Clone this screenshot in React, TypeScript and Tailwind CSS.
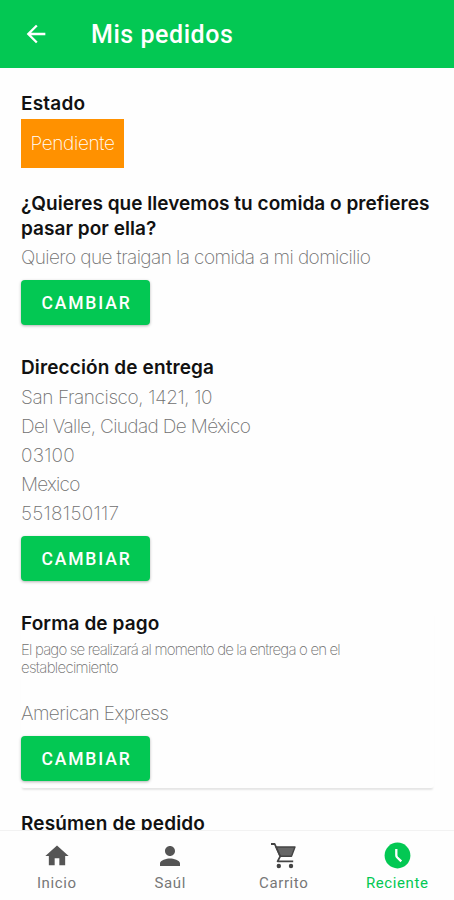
import type { ReactNode } from 'react';

const heading = "whitespace-nowrap font-['Inter',sans-serif] text-[19px] leading-[25px] font-semibold tracking-[0.03px] text-[#111111]";
const body = "whitespace-nowrap font-['Inter',sans-serif] text-[19px] leading-[29px] font-extralight tracking-[-0.58px] text-[#707070]";

function Icon({ d, size, className }: { d: string; size: number; className?: string }) {
  return (
    <svg width={size} height={size} viewBox="0 0 24 24" fill="currentColor" className={className} aria-hidden="true">
      <path d={d} />
    </svg>
  );
}

function CartIcon() {
  return (
    <svg width="27" height="27" viewBox="0 0 27 27" fill="none" stroke="#444444" strokeLinejoin="round" aria-hidden="true">
      <path d="M6 5h19l-3.5 9.3H10.2z" fill="#666666" strokeWidth="1.4" />
      <path d="M1 2h3.7l5.5 12.3-2.6 5h15.6" strokeWidth="1.8" />
      <circle cx="8.8" cy="24" r="2.2" fill="#444444" stroke="none" />
      <circle cx="21" cy="24" r="2.2" fill="#444444" stroke="none" />
    </svg>
  );
}

function ClockIcon() {
  return (
    <svg width="27" height="27" viewBox="0 0 27 27" fill="none" aria-hidden="true">
      <circle cx="13.5" cy="13.5" r="12.9" fill="currentColor" />
      <path d="M12.3 7v6.2c0 1 .3 1.6 1 2.3l4 3.8" stroke="white" strokeWidth="2.3" />
    </svg>
  );
}

function ChangeButton() {
  return (
    <button className="block h-[45px] w-[129px] rounded-[4px] bg-[#03c853] pt-[2px] pl-[2px] text-center font-['Roboto',sans-serif] text-[17.5px] font-medium tracking-[1.85px] text-white shadow-[0_1px_3px_rgba(0,0,0,0.3)]">
      CAMBIAR
    </button>
  );
}

function Tab({ label, active, children }: { label: string; active?: boolean; children: ReactNode }) {
  return (
    <div className={`flex flex-1 flex-col items-center pt-[10px] ${active ? 'text-[#03c853]' : 'text-[#555555]'}`}>
      <div className="flex h-[29px] items-center">{children}</div>
      <span className={`mt-[3px] font-['Roboto',sans-serif] text-[15px] leading-[20px] tracking-[0.6px] ${active ? '' : 'text-[#777777]'}`}>{label}</span>
    </div>
  );
}

export default function App() {
  return (
    <div className="flex h-[900px] w-[454px] flex-col overflow-hidden bg-[#fefefe]">
      <header className="flex h-[68px] shrink-0 items-center bg-[#03c853] pl-[22px] text-white">
        <Icon size={28} d="M20 11H7.83l5.59-5.59L12 4l-8 8 8 8 1.41-1.41L7.83 13H20v-2z" />
        <h1 className="ml-[41px] pt-[2px] font-['Roboto',sans-serif] text-[25px] leading-[30px] font-medium tracking-[0.55px]">Mis pedidos</h1>
      </header>
      <main className="min-h-0 flex-1 overflow-hidden px-[21px] pt-[23px]">
        <section className="h-[100px]">
          <h2 className={heading}><span className="tracking-[0.2px]">Estado</span></h2>
          <div className="mt-[3px] flex h-[49px] w-[103px] items-center justify-center bg-[#ff9100] pt-px font-['Inter',sans-serif] text-[19px] font-extralight tracking-[-0.35px] text-white">Pendiente</div>
        </section>
        <section className="h-[164px]">
          <h2 className={heading}>¿Quieres que llevemos tu comida o prefieres<br />pasar por ella?</h2>
          <p className={`${body} mt-[2px] mb-[8px]`}>Quiero que traigan la comida a mi domicilio</p>
          <ChangeButton />
        </section>
        <section className="h-[256px]">
          <h2 className={heading}><span className="tracking-[0.12px]">Dirección de entrega</span></h2>
          <address className={`${body} mt-[3px] mb-[8px] not-italic`}>
            <span className="tracking-[-0.4px]">San Francisco, 1421, 10</span><br />
            <span className="tracking-[-0.63px]">Del Valle, Ciudad De México</span><br />
            <span className="tracking-[0.2px]">03100</span><br />
            <span className="tracking-[-0.75px]">Mexico</span><br />
            <span className="tracking-[0.3px]">5518150117</span>
          </address>
          <ChangeButton />
        </section>
        <section className="mb-[22px] h-[177px] w-[413px] rounded-[3px] shadow-[0_3px_2px_-1px_rgba(0,0,0,0.1)]">
          <h2 className={heading}><span className="tracking-[0.12px]">Forma de pago</span></h2>
          <p className="mt-[5px] font-['Inter',sans-serif] text-[15px] leading-[18px] font-extralight tracking-[-0.83px] whitespace-nowrap text-[#707070]">
            El pago se realizará al momento de la entrega o en el<br /><span className="tracking-[-0.7px]">establecimiento</span>
          </p>
          <p className={`${body} mt-[22px] mb-[8px]`}>American Express</p>
          <ChangeButton />
        </section>
        <h2 className={`${heading} pt-px`}><span className="tracking-[0.15px]">Resúmen de pedido</span></h2>
      </main>
      <nav className="flex h-[70px] shrink-0 border-t border-[#f2f2f2] bg-[#fefefe]">
        <Tab label="Inicio"><Icon size={28} d="M10 20v-6h4v6h5v-8h3L12 3 2 12h3v8z" /></Tab>
        <Tab label="Saúl"><Icon size={30} d="M12 12c2.21 0 4-1.79 4-4s-1.79-4-4-4-4 1.79-4 4 1.79 4 4 4zm0 2c-2.67 0-8 1.34-8 4v2h16v-2c0-2.66-5.33-4-8-4z" /></Tab>
        <Tab label="Carrito"><CartIcon /></Tab>
        <Tab label="Reciente" active><ClockIcon /></Tab>
      </nav>
    </div>
  );
}
